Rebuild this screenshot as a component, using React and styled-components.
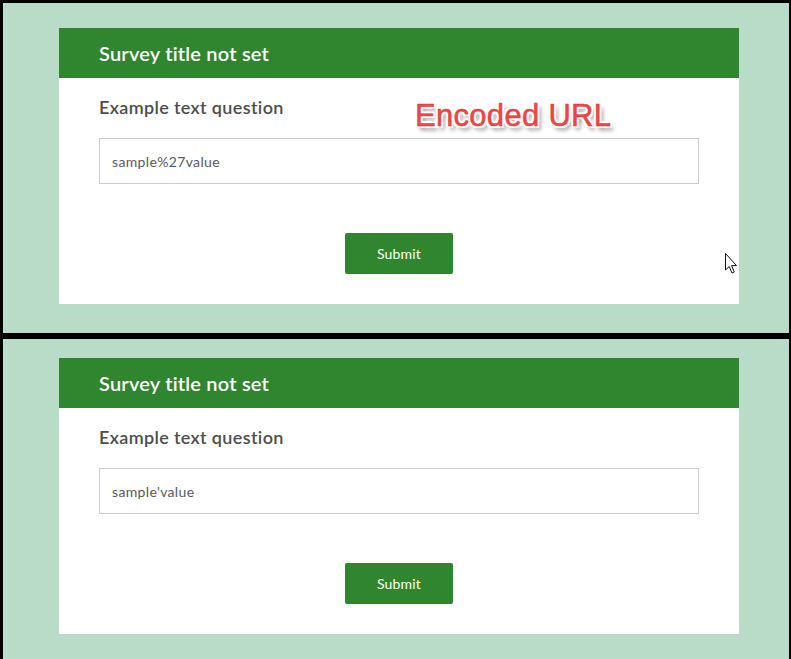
import React from "react";
import styled, { createGlobalStyle } from "styled-components";

const GlobalStyle = createGlobalStyle`
  html, body {
    margin: 0;
    padding: 0;
    background: #000;
  }
  body {
    font-family: Lato, "Open Sans", "Liberation Sans", sans-serif;
  }
`;

const Frame = styled.div`
  width: 791px;
  height: 659px;
  box-sizing: border-box;
  background: #000;
  padding: 3px 2px 0 3px;
  display: flex;
  flex-direction: column;
  gap: 6px;
`;

const Panel = styled.div`
  position: relative;
  height: ${(p) => p.height}px;
  background: #b8dcc8;
  padding-top: ${(p) => p.top}px;
  padding-left: 56px;
  box-sizing: border-box;
`;

const Card = styled.div`
  position: relative;
  width: 680px;
  background: #fff;
`;

const Header = styled.div`
  height: 50px;
  background: #30862f;
  color: #fff;
  display: flex;
  align-items: center;
  padding-left: 40px;
  font-size: 20px;
  font-weight: 600;
  letter-spacing: 0.2px;
`;

const Body = styled.div`
  padding: 17px 40px 30px;
  display: flex;
  flex-direction: column;
`;

const Question = styled.div`
  font-size: 18px;
  line-height: 24px;
  font-weight: 600;
  letter-spacing: 0.35px;
  color: #4d4d4d;
`;

const Input = styled.div`
  margin-top: 19px;
  height: 46px;
  box-sizing: border-box;
  border: 1px solid #cccccc;
  display: flex;
  align-items: center;
  padding-left: 12px;
  font-size: 14px;
  letter-spacing: 0.35px;
  color: #5a5a5a;
`;

const ButtonRow = styled.div`
  margin-top: 49px;
  display: flex;
  justify-content: center;
`;

const Button = styled.button`
  width: 108px;
  height: 41px;
  border: none;
  border-radius: 2px;
  background: #30862f;
  color: #fff;
  font-family: inherit;
  font-size: 14px;
  letter-spacing: 0.2px;
`;

const Label = styled.div`
  position: absolute;
  left: 356px;
  top: 70px;
  font-family: "Liberation Sans", Arial, sans-serif;
  font-size: 31px;
  color: #ef4444;
  -webkit-text-stroke: 0.5px #e83a3a;
  text-shadow: 0 0 1px #fff, 1px 1px 0 #fff, -1px -1px 0 #fff, 1px -1px 0 #fff,
    -1px 1px 0 #fff, 2px 2px 0 #fff, -2px -2px 0 #fff, 2px -2px 0 #fff,
    -2px 2px 0 #fff, 3px 4px 4px rgba(0, 0, 0, 0.5);
  letter-spacing: 0.3px;
`;

const Cursor = styled.svg`
  position: absolute;
  left: 721px;
  top: 249px;
`;

function Survey({ value, label }) {
  return (
    <Card>
      <Header>Survey title not set</Header>
      <Body>
        <Question>Example text question</Question>
        <Input>{value}</Input>
        <ButtonRow>
          <Button>Submit</Button>
        </ButtonRow>
      </Body>
      {label && <Label>{label}</Label>}
    </Card>
  );
}

export default function App() {
  return (
    <>
      <GlobalStyle />
      <Frame>
        <Panel height={330} top={25}>
          <Survey value="sample%27value" label="Encoded URL" />
          <Cursor width="14" height="24" viewBox="0 0 14 24">
            <path
              d="M1.5 1.5 L1.5 18 L5.2 14.5 L8 21 L10.3 20 L7.6 13.6 L12.5 13.6 Z"
              fill="#fff"
              stroke="#111"
              strokeWidth="1"
              strokeLinejoin="round"
            />
          </Cursor>
        </Panel>
        <Panel height={320} top={19}>
          <Survey value="sample'value" />
        </Panel>
      </Frame>
    </>
  );
}
